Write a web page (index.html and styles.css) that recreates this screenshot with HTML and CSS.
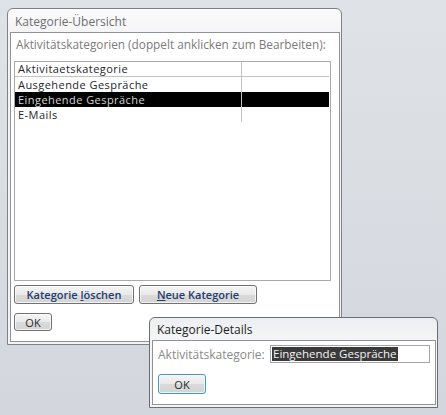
FILE: index.html
```html
<!DOCTYPE html>
<html lang="de">
<head>
  <meta charset="UTF-8">
  <title>Kategorie-Übersicht</title>
  <link rel="stylesheet" href="styles.css">
</head>
<body>
  <div class="window main-window">
    <div class="title">Kategorie-Übersicht</div>
    <div class="panel">
      <div class="hint">Aktivitätskategorien (doppelt anklicken zum Bearbeiten):</div>
      <div class="listbox">
        <div class="row header"><span class="cell">Aktivitaetskategorie</span><span class="cell"></span></div>
        <div class="row"><span class="cell">Ausgehende Gespräche</span><span class="cell"></span></div>
        <div class="row selected"><span class="cell">Eingehende Gespräche</span><span class="cell"></span></div>
        <div class="row"><span class="cell">E-Mails</span><span class="cell"></span></div>
      </div>
      <div class="buttons">
        <button class="btn strong wide">Kategorie <u>l</u>öschen</button>
        <button class="btn strong wide2"><u>N</u>eue Kategorie</button>
      </div>
      <button class="btn ok">OK</button>
    </div>
  </div>

  <div class="window detail-window">
    <div class="title">Kategorie-Details</div>
    <div class="panel">
      <div class="field">
        <span class="label">Aktivitätskategorie:</span>
        <span class="textbox"><span class="sel">Eingehende Gespräche</span></span>
      </div>
      <button class="btn ok focus">OK</button>
    </div>
  </div>
</body>
</html>
```
FILE: styles.css
```css
body { margin: 0; width: 446px; height: 415px; background: linear-gradient(#dfe2e7, #d3d7dd); font-family: "Open Sans", "Noto Sans", sans-serif; font-size: 11px; color: #2a2a2a; position: relative; overflow: hidden; }

.window { position: absolute; display: flex; flex-direction: column; border: 1px solid #7e8287; border-radius: 6px 6px 0 0; background: linear-gradient(#fbfbfc, #f3f3f5 30px); box-sizing: border-box; }
.main-window { left: 7px; top: 8px; width: 335px; height: 337px; }
.detail-window { left: 149px; top: 317px; width: 289px; height: 91px; border-color: #6a6e74; background: linear-gradient(#eceef1, #f6f6f8 24px); }

.title { height: 23px; padding-left: 7px; line-height: 26px; font-size: 12px; color: #6e6e6e; }
.detail-window .title { height: 22px; line-height: 24px; color: #222; }

.panel { flex: 1; margin: 0 1px 2px 2px; border: 1px solid #8f9398; background: #fff; padding: 0 3px; display: flex; flex-direction: column; align-items: flex-start; }

.hint { color: #7b7b7b; height: 28px; line-height: 22px; padding-left: 2px; font-size: 11.8px; }

.listbox { width: 317px; height: 220px; border: 1px solid #a9a9a9; box-sizing: border-box; font-size: 11px; letter-spacing: 0.45px; }
.row { display: flex; height: 15px; line-height: 15px; margin-right: 1px; }
.row.header { border-bottom: 1px solid #c3c3c3; height: 14px; line-height: 14px; }
.cell { padding-left: 3px; color: #23262d; }
.cell:first-child { width: 223px; border-right: 1px solid #c3c3c3; }
.row.selected { background: #000; }
.row.selected .cell { color: #d4d4d4; }

.buttons { display: flex; gap: 5px; margin-top: 4px; }
.btn { font-family: inherit; font-size: 11px; height: 19px; padding: 0; border: 1px solid #717171; border-radius: 3px; background: linear-gradient(#f5f5f5, #e9e9e9 50%, #dadada 51%, #d4d4d4); color: #2a2a2a; box-shadow: inset 0 0 0 1px rgba(255,255,255,0.7); line-height: 15px; }
.btn u { text-underline-offset: 1px; }
.strong { font-weight: 600; color: #1f3b73; }
.wide { width: 120px; }
.wide2 { width: 118px; }
.ok { width: 38px; height: 18px; margin-top: 9px; }

.field { display: flex; align-items: center; gap: 5px; margin-top: 4px; padding-left: 2px; }
.label { color: #8a8a8a; font-size: 12px; width: 107px; white-space: nowrap; }
.textbox { width: 160px; height: 18px; border: 1px solid #a4a4a4; box-sizing: border-box; padding: 1px; display: flex; }
.sel { background: #3a3a3a; color: #f2f2f2; line-height: 14px; padding: 0 1px; font-size: 11.5px; }

.detail-window .ok { width: 48px; height: 20px; margin-top: 11px; margin-left: 2px; border-color: #3d9ad3; }
```
